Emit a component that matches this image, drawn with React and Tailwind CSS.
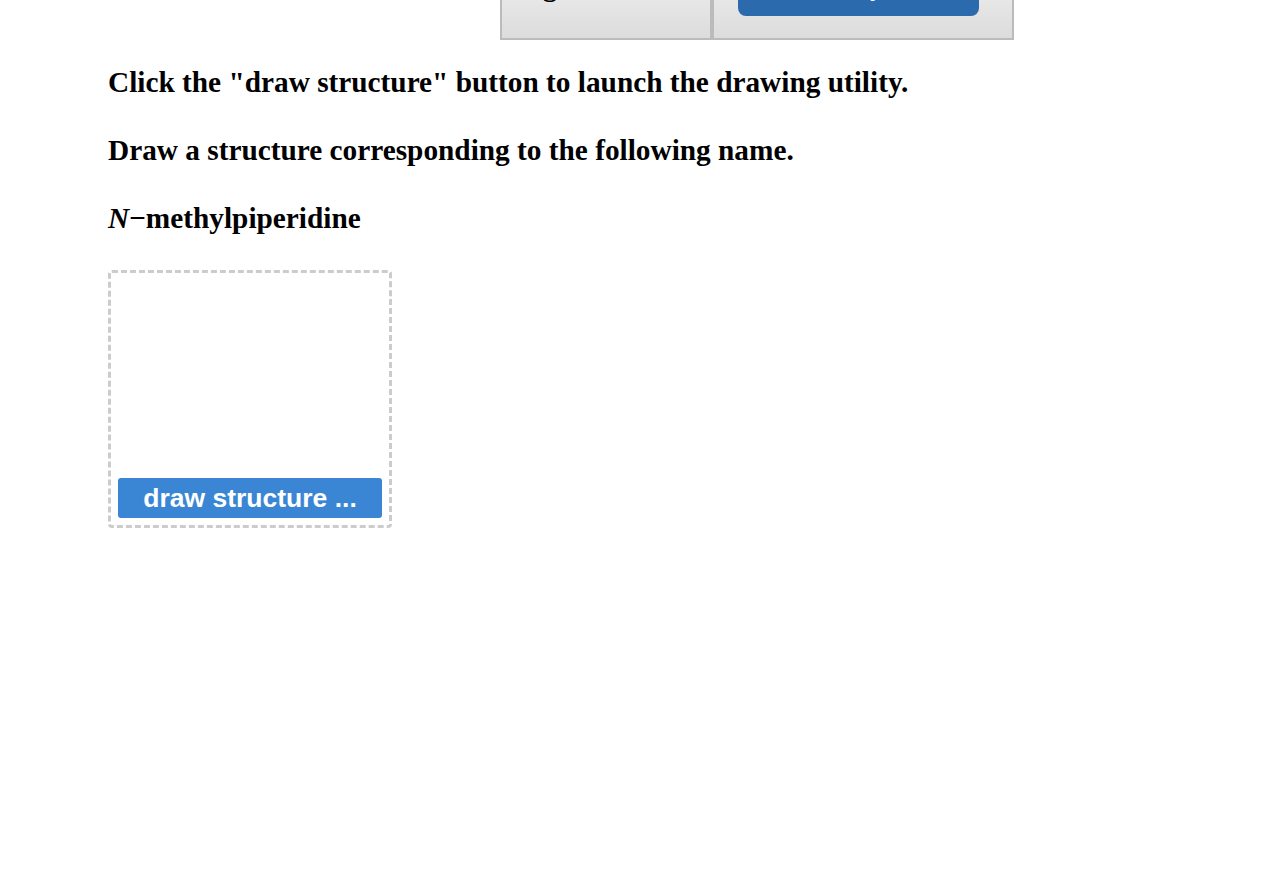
import React from "react";

const serif = { fontFamily: '"Liberation Serif", "Times New Roman", serif' };
const sans = { fontFamily: '"Liberation Sans", Arial, sans-serif' };

const TopBar = () => (
  <div className="flex h-[40px] items-end overflow-hidden pl-[500px]">
    <div className="flex h-[80px] border-2 border-[#bbbbbb] bg-gradient-to-b from-[#f2f2f2] to-[#dcdcdc]">
      <div
        className="relative w-[210px] border-r-2 border-[#bbbbbb] text-[28px] font-bold leading-none"
        style={serif}
      >
        <span className="absolute left-[-2px] top-[11px]">Progress</span>
      </div>
      <div className="flex w-[300px] justify-start border-l-2 border-[#bbbbbb] pl-[24px] pt-[10px]">
        <div
          className="flex h-[44px] w-[241px] items-end justify-center rounded-[8px] bg-[#2c6aae] pb-[16px] text-[22px] font-bold leading-none text-white"
          style={sans}
        >
          Check my work
        </div>
      </div>
    </div>
  </div>
);

export default function App() {
  return (
    <div className="min-h-[876px] w-[1278px] bg-white text-black">
      <TopBar />
      <div className="pl-[108px] pt-[24px] text-[29.3px] font-bold leading-[36px]" style={serif}>
        <p>Click the "draw structure" button to launch the drawing utility.</p>
        <p className="mt-[32px]">Draw a structure corresponding to the following name.</p>
        <p className="mt-[32px]">
          <i>N</i>−methylpiperidine
        </p>
        <div className="mt-[34px] flex h-[258px] w-[284px] flex-col justify-end rounded-[4px] border-[3px] border-dashed border-[#cccccc] px-[7px] pb-[7px]">
          <button
            type="button"
            className="flex h-[40px] w-full items-center justify-center rounded-[3px] bg-[#3a86d4] text-[26.5px] font-bold leading-none text-white"
            style={sans}
          >
            draw structure ...
          </button>
        </div>
      </div>
    </div>
  );
}
